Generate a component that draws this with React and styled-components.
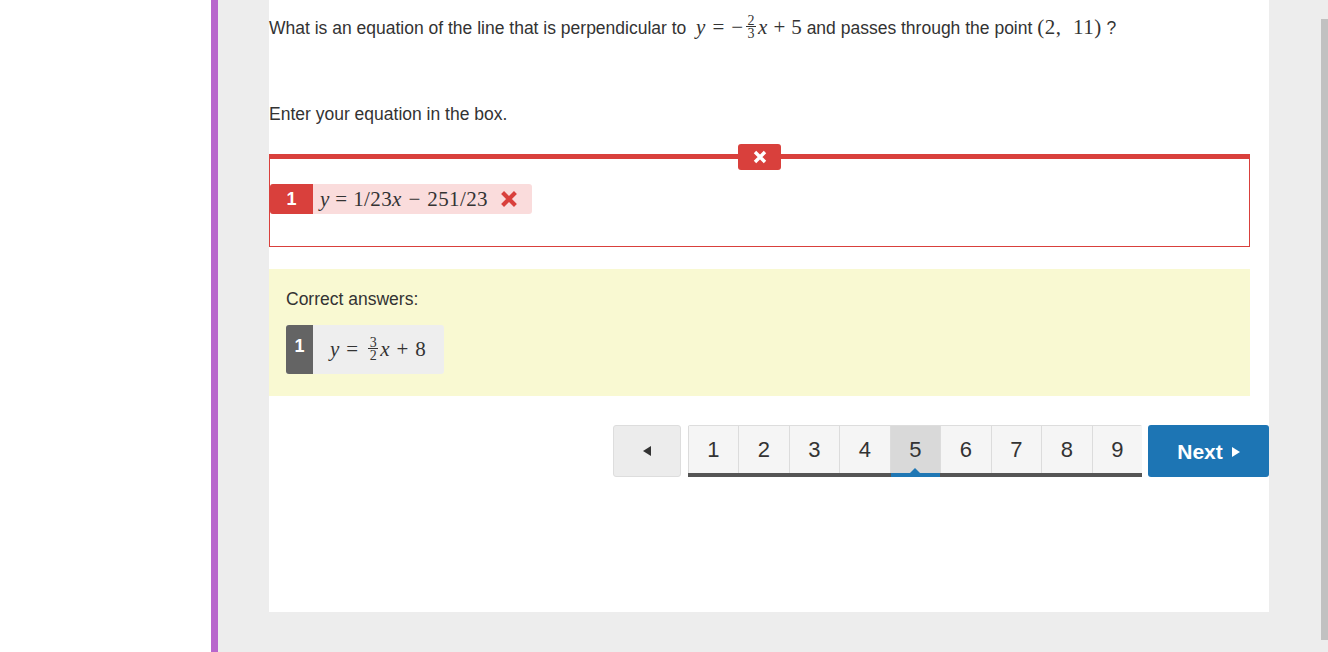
import React from 'react';
import styled, { createGlobalStyle } from 'styled-components';

const Global = createGlobalStyle`
    html, body {
        margin: 0;
        padding: 0;
        height: 100%;
        overflow: hidden;
    }
    body {
        font-family: 'Liberation Sans', Arial, sans-serif;
        color: #333;
        background: #fff;
    }
`;

const Page = styled.div`
    display: flex;
    height: 652px;
`;

const LeftGap = styled.div`
    width: 211px;
    flex: none;
    background: #fff;
`;

const Stripe = styled.div`
    width: 7px;
    flex: none;
    background: #b866cc;
`;

const Main = styled.main`
    flex: 1;
    background: #ededed;
    padding-left: 51px;
    display: flex;
    align-items: flex-start;
`;

const Card = styled.section`
    width: 1000px;
    height: 612px;
    background: #fff;
    box-sizing: border-box;
    padding-top: 15px;
`;

const Question = styled.p`
    margin: 0;
    font-size: 17.5px;
    line-height: 24px;
    width: 981px;
`;

const M = styled.span`
    font-family: 'Liberation Serif', 'Times New Roman', serif;
    font-size: ${p => p.size || 21}px;
    font-style: ${p => (p.italic ? 'italic' : 'normal')};
    white-space: nowrap;
    letter-spacing: ${p => p.ls || 0}px;
`;

const Op = styled.span`
    font-family: 'Liberation Serif', 'Times New Roman', serif;
    font-size: 21px;
    padding: 0 ${p => p.pad ?? 6}px;
`;

const Frac = styled.span`
    display: inline-flex;
    flex-direction: column;
    align-items: center;
    vertical-align: 9px;
    font-family: 'Liberation Serif', 'Times New Roman', serif;
    font-size: 14px;
    line-height: 11px;
    margin: 0 2px 0 3px;
    min-width: 10px;

    span + span {
        border-top: 1px solid #333;
        padding-top: 1px;
        align-self: stretch;
        text-align: center;
    }
`;

const Prompt = styled.p`
    margin: 62px 0 0;
    font-size: 17.5px;
    line-height: 24px;
`;

const AnswerBox = styled.div`
    position: relative;
    margin-top: 28px;
    width: 981px;
    height: 93px;
    box-sizing: border-box;
    border: 1px solid #d9403c;
    border-top-width: 5px;
    display: flex;
    align-items: center;
`;

const CloseTab = styled.div`
    position: absolute;
    top: -15px;
    left: 468px;
    width: 43px;
    height: 26px;
    border-radius: 3px;
    background: #d9403c;
    display: flex;
    align-items: center;
    justify-content: center;
`;

const Chip = styled.div`
    display: flex;
    align-items: ${p => (p.top ? 'stretch' : 'center')};
    height: ${p => p.h}px;
    width: ${p => (p.w ? `${p.w}px` : 'auto')};
    background: ${p => p.bg};
    border-radius: 3px;
    margin-top: ${p => p.mt || 0}px;
`;

const Badge = styled.div`
    width: ${p => p.w}px;
    background: ${p => p.bg};
    color: #fff;
    font-size: 18px;
    font-weight: bold;
    display: flex;
    justify-content: center;
    align-items: ${p => (p.top ? 'flex-start' : 'center')};
    padding-top: ${p => (p.top ? 11 : 0)}px;
    box-sizing: border-box;
    border-radius: 3px 0 0 3px;
    align-self: stretch;
`;

const ChipBody = styled.div`
    display: flex;
    align-items: center;
    padding: 0 ${p => p.pr}px 0 ${p => p.pl}px;
    gap: 12px;
`;

const Feedback = styled.div`
    margin-top: 22px;
    width: 981px;
    height: 127px;
    background: #f9f9d2;
    box-sizing: border-box;
    padding: 19px 17px;
`;

const FeedbackTitle = styled.div`
    font-size: 17.5px;
    line-height: 22px;
`;

const Nav = styled.nav`
    margin-top: 29px;
    display: flex;
    justify-content: flex-end;
    align-items: flex-start;
    gap: 6px;
`;

const PrevButton = styled.button`
    width: 68px;
    height: 52px;
    margin-right: 1px;
    background: #ececec;
    border: 1px solid #ddd;
    border-radius: 3px;
    display: flex;
    align-items: center;
    justify-content: center;
    padding: 0;
`;

const Pages = styled.div`
    display: flex;
    border-bottom: 4px solid #555;
    border-top: 1px solid #ddd;
    border-radius: 2px 2px 0 0;
    box-sizing: border-box;
    height: 52px;
`;

const PageItem = styled.div`
    position: relative;
    width: 50.5px;
    height: 47px;
    display: flex;
    align-items: center;
    justify-content: center;
    padding-top: 1px;
    font-size: 22px;
    color: #333;
    background: ${p => (p.active ? '#d9d9d9' : '#f5f5f5')};
    border-left: 1px solid #dcdcdc;
    box-sizing: border-box;

    ${p =>
        p.active &&
        `
        &::after {
            content: '';
            position: absolute;
            left: 0;
            right: 0;
            bottom: -4px;
            height: 4px;
            background: #1f77b4;
        }
        &::before {
            content: '';
            position: absolute;
            left: 50%;
            bottom: 0;
            margin-left: -5px;
            border: 5px solid transparent;
            border-bottom-color: #1f77b4;
            border-top: 0;
        }
    `}
`;

const NextButton = styled.button`
    width: 121px;
    height: 52px;
    background: #1d75b4;
    border: none;
    border-radius: 3px;
    color: #fff;
    font-family: 'Liberation Sans', Arial, sans-serif;
    font-size: 21px;
    font-weight: bold;
    display: flex;
    align-items: center;
    justify-content: center;
    gap: 9px;
    padding: 1px 0 0;
`;

const Scrollbar = styled.div`
    position: fixed;
    right: 0;
    top: 19px;
    width: 7px;
    height: 621px;
    background: #c1c1c1;
`;

const Cross = ({ size = 14, stroke = 3.4, color = '#fff' }) => (
    <svg width={size} height={size} viewBox="0 0 14 14">
        <path d="M2 2L12 12M12 2L2 12" stroke={color} strokeWidth={stroke} strokeLinecap="butt" />
    </svg>
);

const Tri = ({ dir }) => (
    <svg width="8" height="10" viewBox="0 0 8 10">
        {dir === 'left' ? <path d="M8 0V10L0 5Z" fill="#333" /> : <path d="M0 0V10L8 5Z" fill="#fff" />}
    </svg>
);

export default function App() {
    const pages = [1, 2, 3, 4, 5, 6, 7, 8, 9];
    return (
        <>
            <Global />
            <Page>
                <LeftGap />
                <Stripe />
                <Main>
                    <Card>
                        <Question>
                            What is an equation of the line that is perpendicular to&nbsp;&nbsp;
                            <M italic>y</M>
                            <Op pad={7}>=</Op>
                            <M>−</M>
                            <Frac>
                                <span>2</span>
                                <span>3</span>
                            </Frac>
                            <M italic>x</M>
                            <Op>+</Op>
                            <M>5</M> and passes through the point{' '}
                            <M ls={0.5}>(2,&nbsp;&nbsp;11)</M> ?
                        </Question>

                        <Prompt>Enter your equation in the box.</Prompt>

                        <AnswerBox>
                            <CloseTab>
                                <Cross />
                            </CloseTab>
                            <Chip h={30} bg="#fadcdc" mt={-7}>
                                <Badge w={43} bg="#d9403c">1</Badge>
                                <ChipBody pl={7} pr={14}>
                                    <span>
                                        <M italic size={21}>y</M>
                                        <Op pad={6}>=</Op>
                                        <M size={21} ls={0.4}>1/23</M>
                                        <M italic size={21}>x</M>
                                        <Op pad={7}>−</Op>
                                        <M size={21} ls={0.4}>251/23</M>
                                    </span>
                                    <Cross size={18} stroke={3.2} color="#d9403c" />
                                </ChipBody>
                            </Chip>
                        </AnswerBox>

                        <Feedback>
                            <FeedbackTitle>Correct answers:</FeedbackTitle>
                            <Chip h={49} w={158} bg="#eeeeee" mt={15} top>
                                <Badge w={27} bg="#646464" top>1</Badge>
                                <ChipBody pl={17} pr={16}>
                                    <span>
                                        <M italic>y</M>
                                        <Op pad={7}>=</Op>
                                        <Frac>
                                            <span>3</span>
                                            <span>2</span>
                                        </Frac>
                                        <M italic>x</M>
                                        <Op pad={7}>+</Op>
                                        <M>8</M>
                                    </span>
                                </ChipBody>
                            </Chip>
                        </Feedback>

                        <Nav>
                            <PrevButton>
                                <Tri dir="left" />
                            </PrevButton>
                            <Pages>
                                {pages.map(n => (
                                    <PageItem key={n} active={n === 5}>
                                        {n}
                                    </PageItem>
                                ))}
                            </Pages>
                            <NextButton>
                                Next <Tri dir="right" />
                            </NextButton>
                        </Nav>
                    </Card>
                </Main>
            </Page>
            <Scrollbar />
        </>
    );
}
